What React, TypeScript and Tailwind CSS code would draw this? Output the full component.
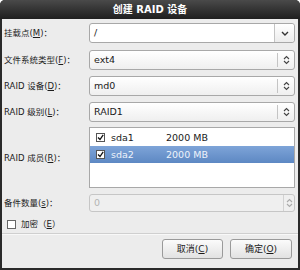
import React from 'react';

function ChevronDown() {
  return (
    <svg width="8" height="5" viewBox="0 0 8 5" className="block">
      <polyline points="1,1 4,4 7,1" fill="none" stroke="#333" strokeWidth="1.4" />
    </svg>
  );
}

function UpDown(props: {color?: string}) {
  const c = props.color || '#444';
  return (
    <svg width="7" height="10" viewBox="0 0 7 10" className="block">
      <polyline points="1,4 3.5,1.5 6,4" fill="none" stroke={c} strokeWidth="1.1" />
      <polyline points="1,6 3.5,8.5 6,6" fill="none" stroke={c} strokeWidth="1.1" />
    </svg>
  );
}

function Check() {
  return (
    <div className="w-[9px] h-[9px] border border-[#555] bg-white flex items-center justify-center">
      <svg width="7" height="7" viewBox="0 0 7 7" className="block">
        <polyline points="1,3.5 3,5.5 6.2,0.8" fill="none" stroke="#111" strokeWidth="1.3" />
      </svg>
    </div>
  );
}

function Label(props: {text: string; mn: string}) {
  return (
    <span className="text-[8.5px] text-[#1c1c1c] whitespace-nowrap">
      {props.text}(<span className="underline">{props.mn}</span>)：
    </span>
  );
}

function Row(props: {label: React.ReactNode; children: React.ReactNode; className?: string}) {
  return (
    <div className={`flex items-center ${props.className || ''}`}>
      <div className="w-[87px] pl-[2px] flex items-center">{props.label}</div>
      <div className="w-[206px]">{props.children}</div>
    </div>
  );
}

function Combo(props: {value: string}) {
  return (
    <div className="h-[20px] flex items-center border border-[#a8a8a8] rounded-[3px] bg-gradient-to-b from-white to-[#efefef]">
      <span className="flex-1 pl-[4px] text-[9.5px] text-[#1a1a1a]">{props.value}</span>
      <div className="w-px h-[14px] bg-[#c4c4c4]" />
      <div className="w-[16px] flex justify-center">
        <UpDown />
      </div>
    </div>
  );
}

const members = [
  {name: 'sda1', size: '2000 MB', selected: false},
  {name: 'sda2', size: '2000 MB', selected: true},
];

export default function App() {
  return (
    <div className="w-[300px] h-[270px] bg-white text-[9.5px] leading-[12px] font-['DejaVu_Sans','Noto_Sans_CJK_SC',sans-serif]">
      <div className="h-full flex flex-col rounded-t-[5px] bg-[#2a2a2a] px-[2px] pb-[2px]">
        <div className="h-[19px] shrink-0 flex items-center justify-center rounded-t-[5px] bg-gradient-to-b from-[#4a4a4a] to-[#1f1f1f] -mx-[2px]">
          <span className="text-[10px] font-bold text-white">创建 RAID 设备</span>
        </div>
        <div className="flex-1 min-h-0 bg-[#ececec] flex flex-col pt-[4px]">
          <Row label={<Label text="挂载点" mn="M" />}>
            <div className="h-[20px] flex items-center border border-[#a8a8a8] rounded-[3px] bg-white">
              <span className="flex-1 pl-[4px] text-[9.5px] text-[#1a1a1a]">/</span>
              <div className="w-px h-full bg-[#c4c4c4]" />
              <div className="w-[19px] h-full flex items-center justify-center bg-gradient-to-b from-white to-[#ececec] rounded-r-[3px]">
                <ChevronDown />
              </div>
            </div>
          </Row>
          <Row className="mt-[7px]" label={<Label text="文件系统类型" mn="F" />}>
            <Combo value="ext4" />
          </Row>
          <Row className="mt-[6px]" label={<Label text="RAID 设备" mn="D" />}>
            <Combo value="md0" />
          </Row>
          <Row className="mt-[6px]" label={<Label text="RAID 级别" mn="L" />}>
            <Combo value="RAID1" />
          </Row>
          <Row className="mt-[5px]" label={<Label text="RAID 成员" mn="R" />}>
            <div className="h-[61px] border border-[#a8a8a8] bg-white pt-px">
              {members.map((m) => (
                <div
                  key={m.name}
                  className={`h-[17px] flex items-center pl-[6px] text-[9.5px] ${
                    m.selected
                      ? 'bg-gradient-to-b from-[#7ea4d8] to-[#5d88c3] text-[#eef3fb]'
                      : 'text-[#1a1a1a]'
                  }`}
                >
                  <Check />
                  <span className="ml-[6px] w-[55px]">{m.name}</span>
                  <span>{m.size}</span>
                </div>
              ))}
            </div>
          </Row>
          <Row className="mt-[6px]" label={<Label text="备件数量" mn="s" />}>
            <div className="h-[18px] flex items-center border border-[#c6c6c6] rounded-[3px] bg-[#efefef]">
              <span className="flex-1 pl-[4px] text-[9.5px] text-[#b4b4b4]">0</span>
              <div className="w-px h-full bg-[#d2d2d2]" />
              <div className="w-[10px] flex justify-center">
                <UpDown color="#aaa" />
              </div>
            </div>
          </Row>
          <div className="mt-[5px] h-[14px] flex items-center pl-[5px]">
            <div className="w-[9px] h-[9px] border border-[#666] bg-white" />
            <span className="ml-[5px] text-[8.5px] text-[#1c1c1c]">
              加密（<span className="underline">E</span>）
            </span>
          </div>
          <div className="mt-[2px] h-px bg-[#cfcfcf]" />
          <div className="h-px bg-[#f8f8f8]" />
          <div className="mt-[4px] flex justify-end gap-[7px] pr-[6px]">
            <button className="w-[61px] h-[20px] border border-[#9a9a9a] rounded-[3px] bg-gradient-to-b from-[#fbfbfb] to-[#e2e2e2] text-[9px] text-[#1a1a1a]">
              取消(<span className="underline">C</span>)
            </button>
            <button className="w-[62px] h-[20px] border border-[#9a9a9a] rounded-[3px] bg-gradient-to-b from-[#fbfbfb] to-[#e2e2e2] text-[9px] text-[#1a1a1a]">
              确定(<span className="underline">O</span>)
            </button>
          </div>
        </div>
      </div>
    </div>
  );
}
